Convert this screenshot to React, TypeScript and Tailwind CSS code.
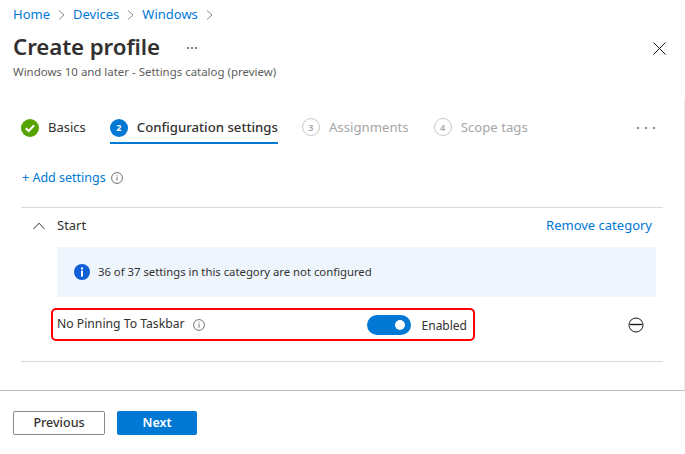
import React from "react";

const font = { fontFamily: '"Noto Sans", "Open Sans", sans-serif' };

function Chevron() {
  return (
    <svg width="7" height="12" viewBox="0 0 7 12" fill="none" stroke="#8a8886" strokeWidth="1">
      <path d="M1 1.5 L6 6 L1 10.5" />
    </svg>
  );
}

function InfoOutline({ size = 12 }: { size?: number }) {
  return (
    <svg width={size} height={size} viewBox="0 0 12 12" fill="none">
      <circle cx="6" cy="6" r="5.4" stroke="#707070" strokeWidth="1" />
      <rect x="5.5" y="5" width="1" height="3.6" fill="#707070" />
      <rect x="5.5" y="3.2" width="1" height="1" fill="#707070" />
    </svg>
  );
}

function StepNum({ n }: { n: number }) {
  return (
    <span className="flex h-[18px] w-[18px] items-center justify-center rounded-full border border-[#c8c8c8] text-[9px] font-semibold text-[#a6a6a6]">
      {n}
    </span>
  );
}

export default function App() {
  return (
    <div className="flex h-[454px] w-[685px] flex-col overflow-hidden bg-white" style={font}>
      <div className="flex h-[30px] items-center gap-[8px] pl-[13px] text-[13px] text-[#0078d4]">
        <span>Home</span>
        <Chevron />
        <span>Devices</span>
        <Chevron />
        <span>Windows</span>
        <Chevron />
      </div>
      <div className="flex h-[36px] items-center pl-[13px] pr-[19px]">
        <span className="-mt-[2px] text-[22.3px] font-semibold leading-none tracking-[-0.1px] text-[#323130]">Create profile</span>
        <span className="ml-[27px] flex gap-[2px] pb-[1px]">
          <span className="h-[2px] w-[2px] rounded-full bg-[#605e5c]" />
          <span className="h-[2px] w-[2px] rounded-full bg-[#605e5c]" />
          <span className="h-[2px] w-[2px] rounded-full bg-[#605e5c]" />
        </span>
        <svg className="ml-auto" width="13" height="13" viewBox="0 0 13 13" stroke="#1b1a19" strokeWidth="1">
          <path d="M0.5 0.5 L12.5 12.5 M12.5 0.5 L0.5 12.5" />
        </svg>
      </div>
      <div className="-mt-px pl-[13px] text-[11.45px] leading-[14px] text-[#605e5c]">
        Windows 10 and later - Settings catalog (preview)
      </div>
      <div className="mt-[21px] flex flex-1 flex-col border-r border-[#e8e8e8]">
        <div className="flex h-[55px] items-center pl-[21px] pr-[29px] text-[13.2px]">
          <div className="flex items-center gap-[9px] text-[13px] text-[#323130]">
            <svg width="18" height="18" viewBox="0 0 18 18">
              <circle cx="9" cy="9" r="9" fill="#57a300" />
              <path d="M4.8 9.2 L7.6 12 L13.2 6.2" fill="none" stroke="#fff" strokeWidth="2" />
            </svg>
            <span>Basics</span>
          </div>
          <div className="relative ml-[24px] flex h-[32px] items-center gap-[9px] text-[#323130]">
            <span className="flex h-[18px] w-[18px] items-center justify-center rounded-full bg-[#0078d4] text-[9px] font-bold text-white">2</span>
            <span className="font-medium">Configuration settings</span>
            <span className="absolute bottom-0 left-0 right-0 h-[2px] bg-[#0078d4]" />
          </div>
          <div className="ml-[24px] flex items-center gap-[9px] text-[#a6a6a6]">
            <StepNum n={3} />
            <span>Assignments</span>
          </div>
          <div className="ml-[25px] flex items-center gap-[9px] text-[#a6a6a6]">
            <StepNum n={4} />
            <span>Scope tags</span>
          </div>
          <span className="ml-auto flex gap-[6px]">
            <span className="h-[2px] w-[2px] rounded-full bg-[#605e5c]" />
            <span className="h-[2px] w-[2px] rounded-full bg-[#605e5c]" />
            <span className="h-[2px] w-[2px] rounded-full bg-[#605e5c]" />
          </span>
        </div>
        <div className="mt-[6px] flex h-[32px] items-center gap-[5px] pl-[22px] pt-[2px] text-[12.5px] text-[#0078d4]">
          <span>+ Add settings</span>
          <InfoOutline />
        </div>
        <div className="mx-[21px] mt-[14px] border-y border-[#d9d9d9]">
          <div className="flex h-[39px] items-center pb-[4px] pl-[12px] pr-[11px] text-[13px]">
            <svg width="12" height="8" viewBox="0 0 12 8" fill="none" stroke="#323130" strokeWidth="1">
              <path d="M0.5 7 L6 1.2 L11.5 7" />
            </svg>
            <span className="ml-[12px] text-[#323130]">Start</span>
            <span className="ml-auto text-[#0078d4]">Remove category</span>
          </div>
          <div className="ml-[36px] mr-[7px] flex h-[50px] items-center gap-[8px] bg-[#eef5fd] pl-[17px] text-[11.3px] text-[#323130]">
            <svg width="16" height="16" viewBox="0 0 16 16">
              <circle cx="8" cy="8" r="8" fill="#0f5fd7" />
              <rect x="7" y="6.6" width="2" height="6" fill="#fff" />
              <rect x="7" y="3.4" width="2" height="2" fill="#fff" />
            </svg>
            <span>36 of 37 settings in this category are not configured</span>
          </div>
          <div className="flex h-[64px] items-start pl-[30px] pr-[19px] pt-[11px]">
            <div className="flex h-[33px] w-[424px] items-center rounded-[5px] border-2 border-[#ff0000] pl-[4px] pr-[6px] text-[12.2px] text-[#323130]">
              <span>No Pinning To Taskbar</span>
              <span className="ml-[8px]"><InfoOutline /></span>
              <span className="relative ml-auto h-[20px] w-[44px] rounded-full bg-[#0078d4]">
                <span className="absolute right-[6px] top-[5px] h-[10px] w-[10px] rounded-full bg-white" />
              </span>
              <span className="ml-[11px] pt-[2px] text-[12px]">Enabled</span>
            </div>
            <svg className="ml-auto mt-[9px]" width="16" height="16" viewBox="0 0 16 16" fill="none" stroke="#1b1a19" strokeWidth="1">
              <circle cx="8" cy="8" r="7" />
              <path d="M2 7.5 H14" strokeWidth="1.4" />
            </svg>
          </div>
        </div>
        <div className="flex-1" />
      </div>
      <div className="flex h-[64px] items-start gap-[12px] border-t border-[#bfbfbf] pl-[13px] pt-[20px] text-[12.5px]">
        <button className="flex h-[24px] w-[92px] items-center justify-center rounded-[2px] border border-[#8a8886] font-medium text-[#323130]">
          Previous
        </button>
        <button className="flex h-[24px] w-[80px] items-center justify-center rounded-[2px] bg-[#0078d4] font-semibold text-white">
          Next
        </button>
      </div>
    </div>
  );
}
